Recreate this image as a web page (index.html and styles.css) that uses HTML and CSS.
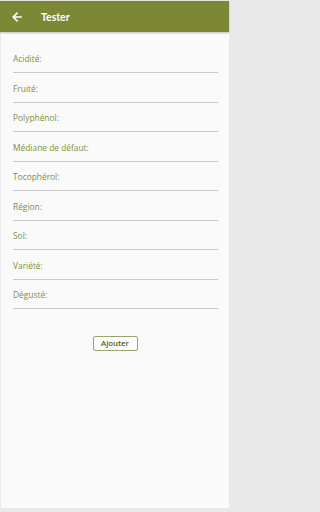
FILE: index.html
```html
<!DOCTYPE html>
<html lang="fr">
<head>
<meta charset="utf-8">
<title>Tester</title>
<link rel="stylesheet" href="styles.css">
</head>
<body>
<div class="app">
  <header class="bar">
    <svg class="back" width="10" height="10" viewBox="0 0 10 10" aria-hidden="true">
      <path d="M9 5H1.6M5 1.2L1.2 5L5 8.8" fill="none" stroke="#ffffff" stroke-width="1.6" stroke-linecap="square"/>
    </svg>
    <h1 class="title">Tester</h1>
  </header>
  <main class="card">
    <form class="form">
      <div class="row"><span class="label">Acidité:</span></div>
      <div class="row"><span class="label">Fruité:</span></div>
      <div class="row"><span class="label">Polyphénol:</span></div>
      <div class="row"><span class="label">Médiane de défaut:</span></div>
      <div class="row"><span class="label">Tocophérol:</span></div>
      <div class="row"><span class="label">Région:</span></div>
      <div class="row"><span class="label">Sol:</span></div>
      <div class="row"><span class="label">Variété:</span></div>
      <div class="row"><span class="label">Dégusté:</span></div>
      <div class="actions"><button type="button" class="btn">Ajouter</button></div>
    </form>
  </main>
</div>
</body>
</html>
```
FILE: styles.css
```css
html, body {
  margin: 0;
  padding: 0;
  background: #e9e9e9;
}
body {
  font-family: "Open Sans", "Noto Sans", sans-serif;
}
.app {
  width: 229px;
  height: 512px;
  display: flex;
  flex-direction: column;
  background: #e9e9e9;
}
.bar {
  height: 31px;
  margin-top: 1px;
  flex: none;
  background: #7d8837;
  display: flex;
  align-items: center;
  padding-left: 12px;
  box-shadow: 0 1px 2px rgba(0,0,0,0.25);
  position: relative;
  z-index: 1;
}
.back {
  display: block;
}
.title {
  margin: 0 0 0 19px;
  font-family: "Lato", "Open Sans", sans-serif;
  font-weight: 700;
  font-size: 10.5px;
  color: #ffffff;
  line-height: 12px;
}
.card {
  flex: 1;
  margin: 0 0 4px 1px;
  background: #fafafa;
}
.form {
  margin: 0;
  padding: 11.5px 11px 0 12px;
}
.row {
  padding: 9.5px 0 7px;
  border-bottom: 1px solid #c9c9c9;
}
.label {
  display: block;
  font-size: 8.4px;
  line-height: 12px;
  color: #7f8f3c;
}
.actions {
  display: flex;
  justify-content: center;
  padding-top: 27px;
  padding-right: 1px;
}
.btn {
  font-family: "Open Sans", sans-serif;
  font-weight: 600;
  font-size: 7.8px;
  color: #4f5a22;
  background: #fcfcfc;
  border: 1px solid #9ba26a;
  border-radius: 2px;
  width: 45px;
  height: 15px;
  padding: 0;
  line-height: 13px;
}
```
